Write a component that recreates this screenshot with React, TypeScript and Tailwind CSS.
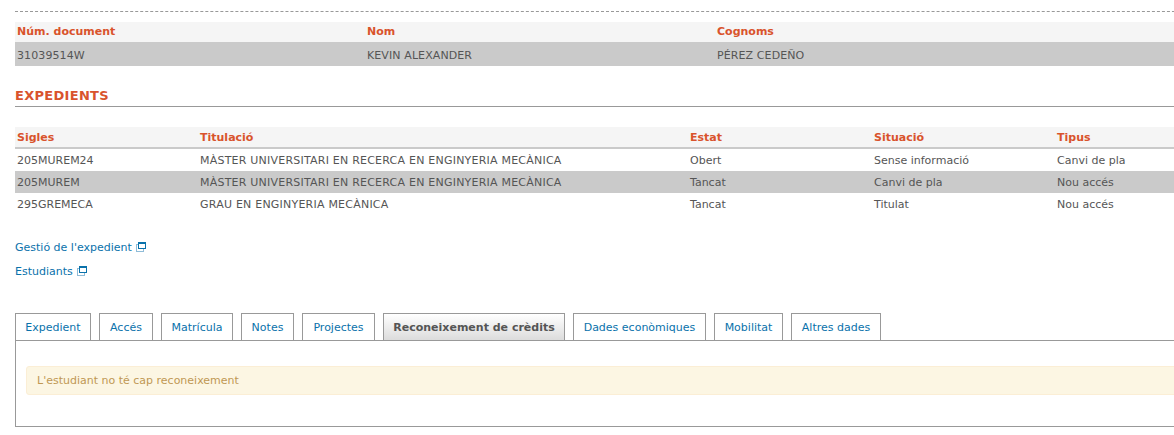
import React from "react";

const expedients = [
  { sigles: "205MUREM24", titulacio: "MÀSTER UNIVERSITARI EN RECERCA EN ENGINYERIA MECÀNICA", estat: "Obert", situacio: "Sense informació", tipus: "Canvi de pla" },
  { sigles: "205MUREM", titulacio: "MÀSTER UNIVERSITARI EN RECERCA EN ENGINYERIA MECÀNICA", estat: "Tancat", situacio: "Canvi de pla", tipus: "Nou accés" },
  { sigles: "295GREMECA", titulacio: "GRAU EN ENGINYERIA MECÀNICA", estat: "Tancat", situacio: "Titulat", tipus: "Nou accés" },
];

const tabs = [
  { label: "Expedient", width: "w-[76px]" },
  { label: "Accés", width: "w-[54px]" },
  { label: "Matrícula", width: "w-[72px]" },
  { label: "Notes", width: "w-[53px]" },
  { label: "Projectes", width: "w-[73px]" },
  { label: "Reconeixement de crèdits", width: "w-[182px]" },
  { label: "Dades econòmiques", width: "w-[133px]" },
  { label: "Mobilitat", width: "w-[69px]" },
  { label: "Altres dades", width: "w-[90px]" },
];

const ExternalIcon = () => (
  <svg width="10" height="10" viewBox="0 0 10 10" className="mb-[3px] ml-[4px] inline-block">
    <rect x="0.5" y="2.5" width="7" height="7" fill="none" stroke="#8fbcd8" />
    <rect x="2.5" y="0.5" width="7" height="6" fill="#fff" stroke="#0a72ab" />
    <rect x="2" y="0" width="8" height="2" fill="#0a72ab" />
  </svg>
);

const App = () => {
  return (
    <div className="h-[435px] w-[1174px] overflow-hidden bg-white font-['DejaVu_Sans',sans-serif] text-[11px] text-[#555]">
      <div className="w-[1200px] pl-[15px] pt-[11px]">
        <div className="border-t border-dashed border-[#999]" />

        <div className="mt-[10px] grid h-[20px] grid-cols-[350px_350px_1fr] items-center bg-[#f5f5f5] pl-[2px] font-bold text-[#d9532c]">
          <div>Núm. document</div>
          <div>Nom</div>
          <div>Cognoms</div>
        </div>
        <div className="grid h-[24px] grid-cols-[350px_350px_1fr] items-center bg-[#cacaca] pl-[2px] pt-[4px] tracking-[0.1px]">
          <div>31039514W</div>
          <div>KEVIN ALEXANDER</div>
          <div>PÉREZ CEDEÑO</div>
        </div>

        <h2 className="mt-[21px] h-[19px] text-[13px] leading-[17px] font-bold tracking-[0.3px] text-[#d9532c]">EXPEDIENTS</h2>
        <div className="border-t border-[#999]" />

        <div className="mt-[20px] grid h-[22px] grid-cols-[183px_490px_184px_183px_1fr] items-center border-b-2 border-[#cacaca] bg-[#f5f5f5] pl-[2px] pt-[2px] font-bold text-[#d9532c]">
          <div>Sigles</div>
          <div>Titulació</div>
          <div>Estat</div>
          <div>Situació</div>
          <div>Tipus</div>
        </div>
        {expedients.map((row, i) => (
          <div
            key={row.sigles}
            className={`grid h-[22px] grid-cols-[183px_490px_184px_183px_1fr] items-center pl-[2px] pt-[2px] ${i === 1 ? "bg-[#cacaca]" : "bg-white"}`}
          >
            <div>{row.sigles}</div>
            <div className="tracking-[0.22px]">{row.titulacio}</div>
            <div>{row.estat}</div>
            <div>{row.situacio}</div>
            <div>{row.tipus}</div>
          </div>
        ))}

        <div className="mt-[26px] flex flex-col gap-[10px] text-[#0a72ab]">
          <a className="h-[14px] leading-[14px]">Gestió de l'expedient<ExternalIcon /></a>
          <a className="h-[14px] leading-[14px]">Estudiants<ExternalIcon /></a>
        </div>

        <div className="mt-[34px] flex gap-[8px]">
          {tabs.map((tab) => {
            const active = tab.label === "Reconeixement de crèdits";
            return (
              <div
                key={tab.label}
                className={`flex h-[27px] items-center justify-center border border-b-0 border-[#999] pt-[2px] ${tab.width} ${active ? "bg-gradient-to-b from-white to-[#dcdcdc] font-bold" : "bg-white text-[#0a72ab]"}`}
              >
                {tab.label}
              </div>
            );
          })}
        </div>
        <div className="h-[87px] border border-r-0 border-[#999] pt-[25px] pl-[10px]">
          <div className="flex h-[29px] items-center rounded-[3px] border border-[#fbeed5] bg-[#fcf6e3] pl-[10px] pt-[2px] text-[#c09853]">
            L'estudiant no té cap reconeixement
          </div>
        </div>
      </div>
    </div>
  );
};

export default App;
